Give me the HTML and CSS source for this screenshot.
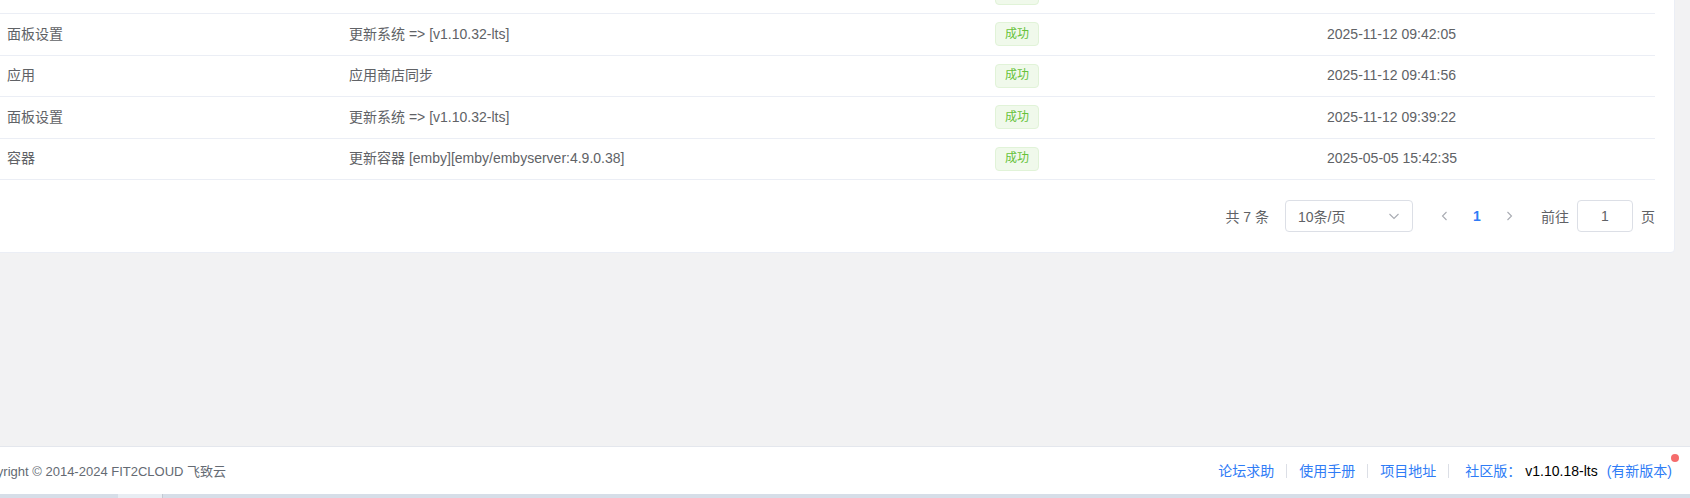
FILE: index.html
```html
<!DOCTYPE html>
<html lang="zh-CN">
<head>
    <meta charset="UTF-8">
    <meta name="viewport" content="width=device-width, initial-scale=1.0">
    <title>操作日志</title>
    <link rel="stylesheet" href="styles.css">
</head>
<body>

<div class="layout">
    <div class="main">
        <div class="card">
            <div class="log-table">
                <!-- row scrolled out of view, only the tag bottom shows -->
                <div class="log-row">
                    <div class="cell"></div>
                    <div class="cell"></div>
                    <div class="cell"><span class="tag tag-stub"></span></div>
                    <div class="cell"></div>
                </div>
                <div class="log-row">
                    <div class="cell">面板设置</div>
                    <div class="cell">更新系统 =&gt; [v1.10.32-lts]</div>
                    <div class="cell"><span class="tag">成功</span></div>
                    <div class="cell">2025-11-12 09:42:05</div>
                </div>
                <div class="log-row">
                    <div class="cell">应用</div>
                    <div class="cell">应用商店同步</div>
                    <div class="cell"><span class="tag">成功</span></div>
                    <div class="cell">2025-11-12 09:41:56</div>
                </div>
                <div class="log-row">
                    <div class="cell">面板设置</div>
                    <div class="cell">更新系统 =&gt; [v1.10.32-lts]</div>
                    <div class="cell"><span class="tag">成功</span></div>
                    <div class="cell">2025-11-12 09:39:22</div>
                </div>
                <div class="log-row">
                    <div class="cell">容器</div>
                    <div class="cell">更新容器 [emby][emby/embyserver:4.9.0.38]</div>
                    <div class="cell"><span class="tag">成功</span></div>
                    <div class="cell">2025-05-05 15:42:35</div>
                </div>
            </div>

            <div class="pagination">
                <span class="total">共 7 条</span>
                <div class="size-select">
                    <span>10条/页</span>
                    <svg class="select-arrow" viewBox="0 0 14 14" width="14" height="14">
                        <polyline points="2.5,5 7,9.5 11.5,5" fill="none" stroke="currentColor" stroke-width="1.1"/>
                    </svg>
                </div>
                <button class="pg-btn" disabled>
                    <svg viewBox="0 0 12 12" width="12" height="12">
                        <polyline points="7.5,2 3.5,6 7.5,10" fill="none" stroke="currentColor" stroke-width="1.1"/>
                    </svg>
                </button>
                <span class="pager-item active">1</span>
                <button class="pg-btn" disabled>
                    <svg viewBox="0 0 12 12" width="12" height="12">
                        <polyline points="4.5,2 8.5,6 4.5,10" fill="none" stroke="currentColor" stroke-width="1.1"/>
                    </svg>
                </button>
                <span class="jumper">前往<span class="jump-input">1</span>页</span>
            </div>
        </div>
    </div>

    <div class="footer">
        <div class="copyright">Copyright © 2014-2024 FIT2CLOUD 飞致云</div>
        <div class="footer-links">
            <a class="footer-link">论坛求助</a>
            <span class="divider"></span>
            <a class="footer-link">使用手册</a>
            <span class="divider"></span>
            <a class="footer-link">项目地址</a>
            <span class="divider"></span>
            <span class="version">
                <span class="version-label">社区版：</span>
                <span class="version-num">v1.10.18-lts</span>
                <a class="version-new">(有新版本)<span class="badge-dot"></span></a>
            </span>
        </div>
    </div>

    <div class="bottom-bar">
        <span class="bar-seg"></span>
        <span class="bar-seg bar-seg-light"></span>
        <span class="bar-line"></span>
    </div>
</div>

</body>
</html>
```

FILE: styles.css
```css
* {
    box-sizing: border-box;
}

html,
body {
    margin: 0;
    height: 100%;
}

body {
    font-family: "Liberation Sans", "Noto Sans CJK SC", sans-serif;
    font-size: 14px;
    color: #606266;
    background-color: #f2f2f3;
    overflow: hidden;
}

/* page is scrolled a little: left edge and top row are cut off */
.layout {
    display: flex;
    flex-direction: column;
    height: 100vh;
    margin-left: -45px;
}

.main {
    flex: 1;
    padding: 0 15px 0 20px;
    overflow: hidden;
}

.card {
    margin-top: -28.5px;
    background-color: #fff;
    border: 1px solid #ebeef5;
    border-radius: 4px;
    padding: 0 19px 20px;
}

.log-row {
    display: grid;
    grid-template-columns: 342px 646px 332px 340px;
    align-items: center;
    height: 41.5px;
    border-bottom: 1px solid #ebeef5;
}

.cell {
    padding: 0 12px;
    white-space: nowrap;
    line-height: 23px;
}

.tag {
    display: inline-flex;
    align-items: center;
    height: 24px;
    padding: 0 9px;
    font-size: 12px;
    color: #67c23a;
    background-color: #f0f9eb;
    border: 1px solid #e1f3d8;
    border-radius: 4px;
    vertical-align: middle;
}

.tag-stub {
    width: 44px;
}

.pagination {
    display: flex;
    justify-content: flex-end;
    align-items: center;
    margin-top: 20px;
    height: 32px;
}

.total {
    margin-right: 16px;
}

.size-select {
    display: flex;
    align-items: center;
    justify-content: space-between;
    width: 128px;
    height: 32px;
    padding: 0 11px 0 12px;
    border: 1px solid #dcdfe6;
    border-radius: 4px;
    margin-right: 16px;
}

.select-arrow {
    color: #a8abb2;
}

.pg-btn {
    display: flex;
    align-items: center;
    justify-content: center;
    width: 32px;
    height: 32px;
    padding: 0;
    border: none;
    background: none;
    color: #303133;
}

.pg-btn[disabled] {
    color: #a8abb2;
}

.pager-item {
    width: 32px;
    text-align: center;
    line-height: 32px;
}

.pager-item.active {
    color: #2f7cf6;
    font-weight: bold;
}

.jumper {
    display: flex;
    align-items: center;
    margin-left: 16px;
}

.jump-input {
    width: 56px;
    height: 32px;
    margin: 0 8px;
    line-height: 30px;
    text-align: center;
    border: 1px solid #dcdfe6;
    border-radius: 4px;
}

.footer {
    display: flex;
    justify-content: space-between;
    align-items: center;
    height: 48px;
    padding: 0 18px 0 18px;
    background-color: #fff;
    border-top: 1px solid #e4e7ed;
}

.copyright {
    font-size: 13px;
    color: #646a73;
}

.footer-links {
    display: flex;
    align-items: center;
    line-height: 20px;
}

.footer-link {
    color: #2f7cf6;
}

.divider {
    width: 1px;
    height: 14px;
    margin: 0 12px;
    background-color: #dcdfe6;
}

.version {
    display: flex;
    align-items: center;
    margin-left: 4px;
}

.version-label {
    color: #2f7cf6;
    margin-right: 4px;
}

.version-num {
    color: #000;
    margin-right: 9px;
}

.version-new {
    position: relative;
    color: #2f7cf6;
}

.badge-dot {
    position: absolute;
    top: -7px;
    right: -7px;
    width: 8px;
    height: 8px;
    border-radius: 50%;
    background-color: #f56c6c;
}

.bottom-bar {
    display: flex;
    height: 4px;
    background-color: #d6dee8;
}

.bar-seg {
    width: 163px;
}

.bar-seg-light {
    width: 44px;
    background-color: #e8edf3;
}

.bar-line {
    width: 1px;
    background-color: #c3cad3;
}
```
